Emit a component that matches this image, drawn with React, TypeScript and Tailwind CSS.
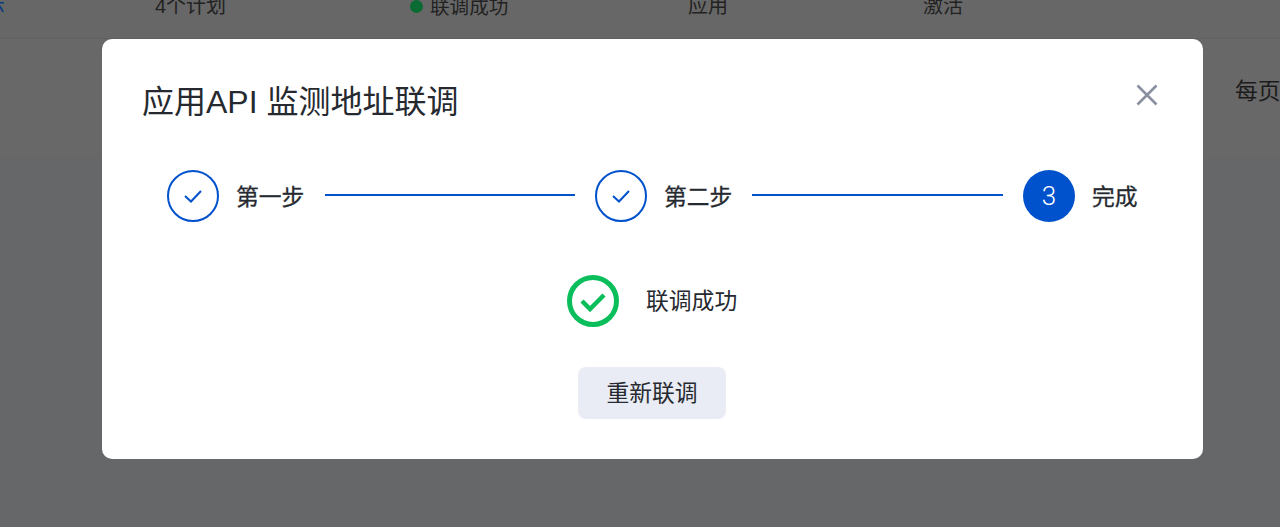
const font = '[font-family:"Liberation_Sans","Noto_Sans_CJK_SC",sans-serif]';

function Step({ label, done, n }: { label: string; done: boolean; n?: number }) {
  return (
    <div className="flex items-center shrink-0">
      {done ? (
        <div className="w-[52px] h-[52px] rounded-full border-2 border-[#0052cc] flex items-center justify-center">
          <svg width="20" height="14" viewBox="0 0 20 14" fill="none">
            <path d="M2 7l6 5.500L18 2" stroke="#0052cc" strokeWidth="2" />
          </svg>
        </div>
      ) : (
        <div className="w-[52px] h-[52px] rounded-full bg-[#0052cc] text-white flex items-center justify-center text-[26px] leading-none font-light [font-family:Roboto,sans-serif]">
          {n}
        </div>
      )}
      <span className="ml-[17px] min-w-[69px] pt-[2px] text-[22.8px] leading-[50px] text-[#262a30] whitespace-nowrap [-webkit-text-stroke:0.3px_#262a30]">{label}</span>
    </div>
  );
}

function Line({ second }: { second?: boolean }) {
  return <div className={`h-[2px] bg-[#0052cc] mr-[20px] -mt-[2px] ${second ? "ml-[19px] w-[251px]" : "ml-[20px] w-[250px]"}`} />;
}

export default function App() {
  return (
    <div className={`relative w-[1280px] h-[527px] overflow-hidden bg-[#666768] ${font}`}>
      <div className="h-[39px] border-b border-[#5f6064] bg-[#676767] overflow-hidden flex items-start text-[20px] leading-[12px] text-[#222] whitespace-nowrap">
        <div className="w-[155px] shrink-0 overflow-hidden text-[#0a3a85]"><span className="block -ml-[15px]">示</span></div>
        <div className="w-[255px] shrink-0">4个计划</div>
        <div className="w-[278px] shrink-0 flex items-center">
          <span className="w-[13px] h-[13px] rounded-full bg-[#0a6b33] mr-[7px]" />
          <span className="text-[19.6px]">联调成功</span>
        </div>
        <div className="w-[235px] shrink-0">应用</div>
        <div className="shrink-0">激活</div>
      </div>
      <div className="h-[118px] bg-[#686868] flex justify-end pt-[36px] pr-0 overflow-hidden">
        <span className="text-[22.8px] leading-[32px] text-[#1c1c1c] whitespace-nowrap w-[45px] overflow-hidden">每页</span>
      </div>

      <div className="absolute left-[102px] top-[39px] w-[1101px] h-[420px] bg-white rounded-[10px] pt-[43px]">
        <button className="absolute right-[44px] top-[44px] w-[24px] h-[24px] flex items-center justify-center">
          <svg width="24" height="24" viewBox="0 0 24 24" fill="none">
            <path d="M2.500 2.500l19 19M21.500 2.500l-19 19" stroke="#8a90a0" strokeWidth="2.600" />
          </svg>
        </button>
        <h1 className="pl-[40px] text-[32px] leading-[40px] font-normal text-[#262a30] whitespace-nowrap">
          应用API 监测地址联调
        </h1>
        <div className="mt-[48px] ml-[65px] flex items-center">
          <Step label="第一步" done />
          <Line />
          <Step label="第二步" done />
          <Line second />
          <Step label="完成" done={false} n={3} />
        </div>
        <div className="mt-[53px] ml-[465px] flex items-center">
          <svg width="52" height="52" viewBox="0 0 52 52" fill="none">
            <circle cx="26" cy="26" r="23.500" stroke="#0abf5b" strokeWidth="5" />
            <path d="M15 26l8 8 14-14" stroke="#0abf5b" strokeWidth="4.500" />
          </svg>
          <span className="ml-[27px] text-[22.8px] leading-[52px] text-[#262a30] whitespace-nowrap">联调成功</span>
        </div>
        <button className="block mt-[40px] ml-[476px] w-[148px] h-[52px] rounded-[8px] bg-[#e9ecf4] text-[22.8px] text-[#262a30] whitespace-nowrap">
          重新联调
        </button>
      </div>
    </div>
  );
}
